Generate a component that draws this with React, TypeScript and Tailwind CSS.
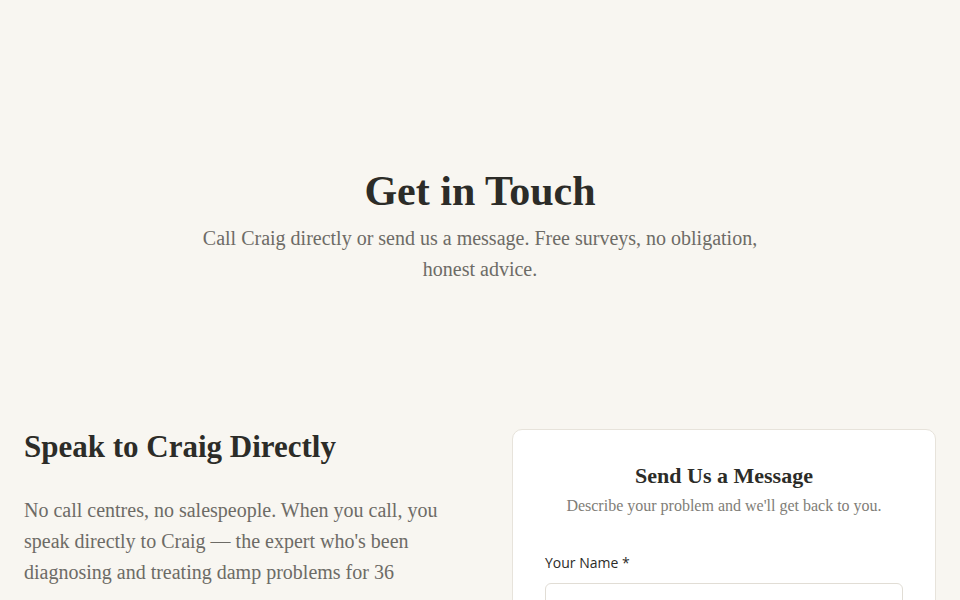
export default function App() {
  const serif = { fontFamily: '"Liberation Serif", "DejaVu Serif", serif' };
  return (
    <div className="min-h-[600px] bg-[#f8f6f1] text-[#2c2c28]" style={{ fontFamily: '"Liberation Serif", serif' }}>
      <section className="px-6 pt-[166px] pb-[100px] text-center">
        <h1 className="text-[42px] leading-[50px] font-bold text-[#2c2c28]" style={serif}>
          Get in Touch
        </h1>
        <p className="mx-auto mt-[7px] max-w-[600px] text-[20px] leading-[31px] text-[#6d6b66]">
          Call Craig directly or send us a message. Free surveys, no obligation, honest advice.
        </p>
      </section>

      <section className="px-6 pt-[44px] pb-16">
        <div className="grid grid-cols-2 gap-16">
          <div>
            <h2 className="text-[31px] leading-[36px] font-bold" style={serif}>
              Speak to Craig Directly
            </h2>
            <p className="mt-[30px] max-w-[420px] text-[20px] leading-[31px] text-[#6d6b66]">
              No call centres, no salespeople. When you call, you speak directly to Craig — the expert
              who's been diagnosing and treating damp problems for 36 years.
            </p>
          </div>

          <div className="rounded-[10px] border border-[#e7e3db] bg-white px-8 pt-[32px] pb-8">
            <h3 className="text-center text-[22px] leading-[28px] font-bold" style={serif}>
              Send Us a Message
            </h3>
            <p className="mt-[5px] text-center text-[16px] leading-[22px] text-[#807d77]">
              Describe your problem and we'll get back to you.
            </p>
            <form className="mt-[36px]">
              <label
                className="block text-[14px] leading-[20px] font-medium text-[#2c2c28]"
                style={{ fontFamily: '"Open Sans", sans-serif' }}
              >
                Your Name *
              </label>
              <input className="mt-[10px] block h-[44px] w-full rounded-[6px] border border-[#e1ddd5] bg-white" />
            </form>
          </div>
        </div>
      </section>
    </div>
  );
}
